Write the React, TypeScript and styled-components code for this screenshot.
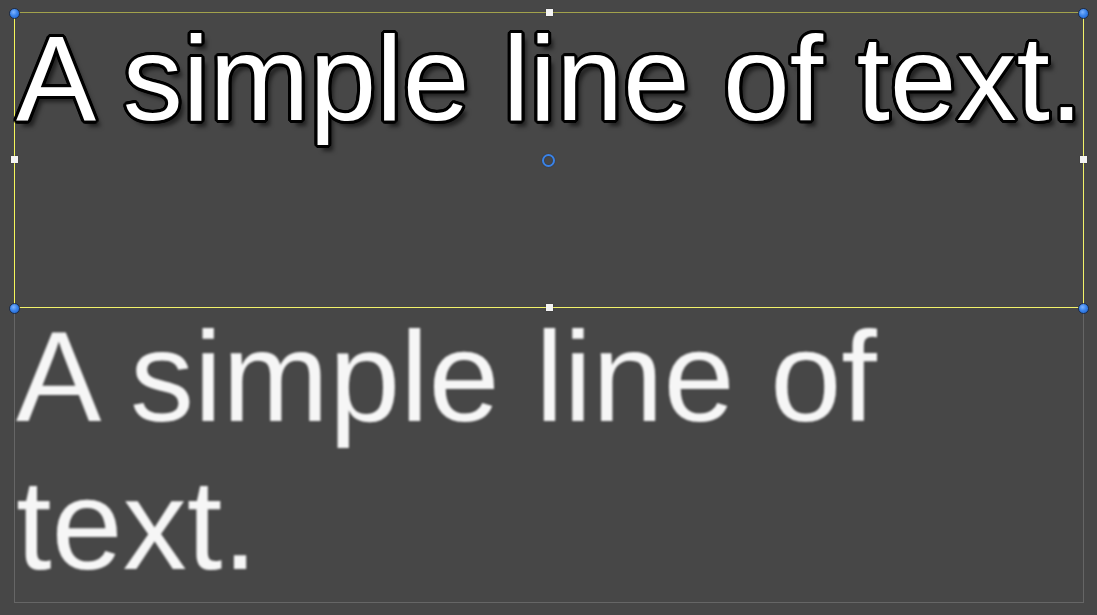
import React from 'react';
import { styled, createGlobalStyle } from 'styled-components';

const GlobalStyle = createGlobalStyle`
  html, body {
    margin: 0;
    padding: 0;
    background: #474747;
    overflow: hidden;
  }
  body {
    font-family: "Liberation Sans", Arial, sans-serif;
  }
`;

const SceneView = styled.div`
  width: 1097px;
  height: 615px;
  padding: 12px 0 0 14px;
  box-sizing: border-box;
  display: flex;
  flex-direction: column;
`;

const SelectedRect = styled.div`
  position: relative;
  width: 1070px;
  height: 296px;
  box-sizing: border-box;
  border-style: solid;
  border-width: 1px;
  border-color: #a2a24c #f2f26a #f2f26a #f5f55a;
  padding: 5px 0 0 1px;
`;

const RectBox = styled.div`
  width: 1070px;
  height: 296px;
  margin-top: -1px;
  box-sizing: border-box;
  border: 1px solid #666;
  border-top: none;
`;

// white label with a black outline and a soft drop shadow
const OutlinedText = styled.div`
  font-size: 120px;
  line-height: 1;
  color: #fff;
  white-space: nowrap;
  text-shadow:
    3px 0 0 #000, -3px 0 0 #000, 0 3px 0 #000, 0 -3px 0 #000,
    2px 2px 0 #000, -2px 2px 0 #000, 2px -2px 0 #000, -2px -2px 0 #000,
    3px 1px 0 #000, 3px -1px 0 #000, -3px 1px 0 #000, -3px -1px 0 #000,
    1px 3px 0 #000, -1px 3px 0 #000, 1px -3px 0 #000, -1px -3px 0 #000,
    5px 6px 4px rgba(0, 0, 0, 0.55);
`;

// low-res text scaled up, so it reads soft
const PlainText = styled.div`
  font-size: 128px;
  line-height: 148px;
  margin-top: -4px;
  padding-left: 1px;
  color: #f6f6f6;
  filter: blur(1.3px);
`;

const Corner = styled.span<{ $x: string; $y: string }>`
  position: absolute;
  left: ${(p) => p.$x};
  top: ${(p) => p.$y};
  width: 9px;
  height: 9px;
  margin: -5px 0 0 -5px;
  border-radius: 50%;
  border: 1px solid #1c2c48;
  background: radial-gradient(circle at 40% 35%, #7fb4ff 0%, #3a84ec 45%, #1d5fc8 100%);
`;

const EdgeHandle = styled.span<{ $x: string; $y: string }>`
  position: absolute;
  left: ${(p) => p.$x};
  top: ${(p) => p.$y};
  width: 7px;
  height: 7px;
  margin: -4px 0 0 -4px;
  background: #f4f4f4;
  box-shadow: 0 0 1px rgba(0, 0, 0, 0.4);
`;

const Pivot = styled.span`
  position: absolute;
  left: 527px;
  top: 141px;
  width: 9px;
  height: 9px;
  border-radius: 50%;
  border: 2px solid #3a82e6;
  box-shadow: 0 0 1px #10203a, inset 0 0 1px #10203a;
`;

export default function App() {
  return (
    <>
      <GlobalStyle />
      <SceneView>
        <SelectedRect>
          <OutlinedText>A simple line of text.</OutlinedText>
          <Corner $x="-1px" $y="0px" />
          <Corner $x="1068px" $y="0px" />
          <Corner $x="-1px" $y="295px" />
          <Corner $x="1068px" $y="295px" />
          <EdgeHandle $x="535px" $y="0px" />
          <EdgeHandle $x="0px" $y="147px" />
          <EdgeHandle $x="1069px" $y="147px" />
          <EdgeHandle $x="535px" $y="295px" />
          <Pivot />
        </SelectedRect>
        <RectBox>
          <PlainText>A simple line of text.</PlainText>
        </RectBox>
      </SceneView>
    </>
  );
}
